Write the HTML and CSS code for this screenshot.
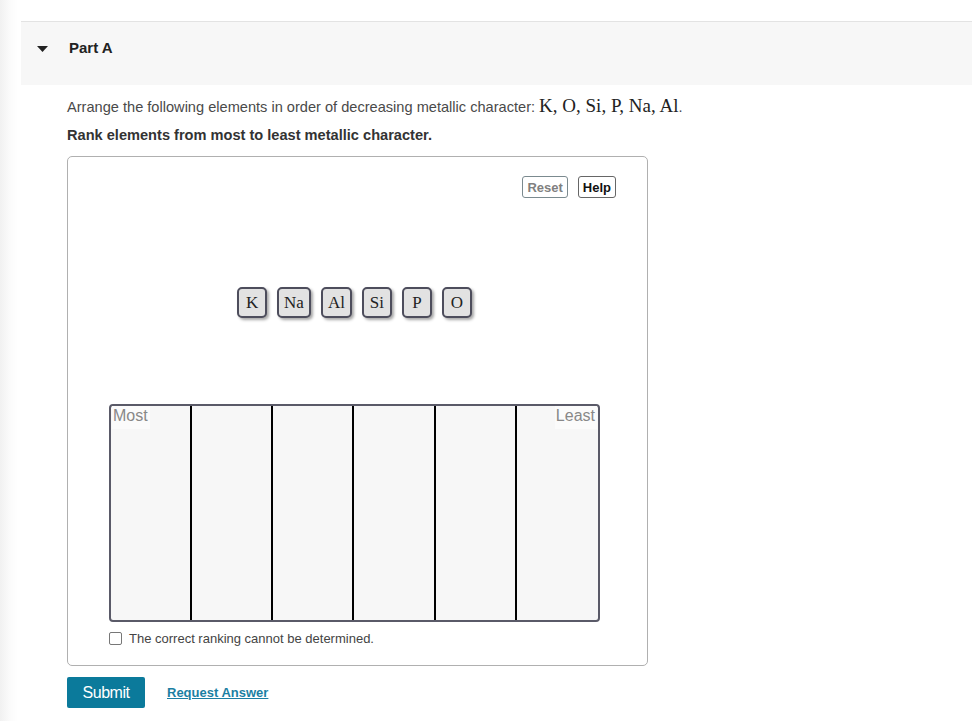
FILE: index.html
```html
<!DOCTYPE html>
<html lang="en">
<head>
  <meta charset="UTF-8">
  <meta name="viewport" content="width=device-width, initial-scale=1.0">
  <title>Part A</title>
  <link rel="stylesheet" href="styles.css">
</head>
<body>
  <div class="page">
    <div class="part-header">
      <svg class="caret" width="11" height="6" viewBox="0 0 11 6"><path d="M0 0 L11 0 L5.5 6 Z" fill="#222"/></svg>
      <h2>Part A</h2>
    </div>

    <div class="part-body">
      <p class="question">Arrange the following elements in order of decreasing metallic character: <span class="math">K, O, Si, P, Na, Al</span>.</p>
      <p class="instruction">Rank elements from most to least metallic character.</p>

      <div class="sort-box">
        <div class="toolbar">
          <button class="tool-btn reset">Reset</button>
          <button class="tool-btn">Help</button>
        </div>

        <div class="tiles">
          <span class="tile">K</span>
          <span class="tile">Na</span>
          <span class="tile">Al</span>
          <span class="tile">Si</span>
          <span class="tile">P</span>
          <span class="tile">O</span>
        </div>

        <div class="ranking">
          <div class="slot"><span class="label">Most</span></div>
          <div class="slot"></div>
          <div class="slot"></div>
          <div class="slot"></div>
          <div class="slot"></div>
          <div class="slot last"><span class="label">Least</span></div>
        </div>

        <label class="cant-tell">
          <span class="box"></span>
          The correct ranking cannot be determined.
        </label>
      </div>

      <div class="actions">
        <button class="submit">Submit</button>
        <a href="#" class="request">Request Answer</a>
      </div>
    </div>
  </div>
</body>
</html>
```

FILE: styles.css
```css
body {
  margin: 0;
  font-family: "Liberation Sans", Arial, sans-serif;
  background: linear-gradient(to right, #f1f1f1 0, #fbfbfb 10px, #fff 18px);
  color: #333;
}

.page {
  padding: 21px 0 0 21px;
}

.part-header {
  display: flex;
  align-items: flex-start;
  box-sizing: border-box;
  height: 64px;
  padding-top: 16px;
  border-top: 1px solid #e3e3e3;
  background-color: #f7f7f7;
}

.caret {
  margin-left: 16px;
  margin-top: 8px;
}

.part-header h2 {
  margin: 0 0 0 21px;
  font-size: 15px;
  line-height: 20px;
  font-weight: bold;
  color: #222;
}

.part-body {
  padding-left: 46px;
}

.question {
  margin: 11px 0 0;
  font-size: 14.6px;
  line-height: 20px;
  color: #4a4a4a;
}

.math {
  font-family: "Liberation Serif", "Times New Roman", serif;
  font-size: 19px;
  color: #222;
}

.instruction {
  margin: 8px 0 0;
  font-size: 14.6px;
  line-height: 20px;
  font-weight: bold;
  color: #333;
}

.sort-box {
  box-sizing: border-box;
  width: 581px;
  height: 510px;
  margin-top: 11px;
  padding: 19px 47px 0 41px;
  border: 1px solid #b0b0b0;
  border-radius: 5px;
}

.toolbar {
  display: flex;
  justify-content: flex-end;
  gap: 10px;
  margin-right: -16px;
}

.tool-btn {
  height: 22px;
  padding: 0 4px;
  font-family: "Liberation Sans", Arial, sans-serif;
  font-size: 13px;
  font-weight: bold;
  color: #111;
  background: #fff;
  border: 1px solid #666;
  border-radius: 3px;
}

.tool-btn.reset {
  color: #808080;
  border-color: #7b8a8f;
}

.tiles {
  display: flex;
  justify-content: center;
  gap: 10px;
  margin-top: 89px;
  height: 33px;
}

.tile {
  display: flex;
  align-items: center;
  justify-content: center;
  min-width: 16px;
  height: 27px;
  padding: 0 5px;
  font-family: "Liberation Serif", "Times New Roman", serif;
  font-size: 17px;
  color: #222;
  background-color: #e2e2e2;
  border: 2px solid #4d4d5c;
  border-radius: 5px;
  box-shadow: 2px 2px 3px rgba(0, 0, 0, 0.35);
}

.ranking {
  display: grid;
  grid-template-columns: repeat(6, 1fr);
  height: 218px;
  margin-top: 84px;
  border: 2px solid #5a5a68;
  border-radius: 4px;
  background-color: #f7f7f7;
  box-sizing: border-box;
}

.slot {
  position: relative;
  border-right: 2px solid #000;
}

.slot.last {
  border-right: none;
}

.label {
  position: absolute;
  top: 0;
  left: 1px;
  padding: 0 2px 4px 1px;
  font-size: 16px;
  line-height: 19px;
  color: #888;
  background-color: #fbfbfb;
}

.slot.last .label {
  left: auto;
  right: 1px;
}

.cant-tell {
  display: flex;
  align-items: center;
  gap: 7px;
  margin-top: 9px;
  font-size: 13px;
  color: #444;
}

.cant-tell .box {
  width: 11px;
  height: 11px;
  border: 1px solid #777;
  border-radius: 2px;
  background: #fff;
}

.actions {
  display: flex;
  align-items: center;
  gap: 22px;
  margin-top: 11px;
}

.submit {
  width: 78px;
  height: 31px;
  font-family: "Liberation Sans", Arial, sans-serif;
  font-size: 16px;
  letter-spacing: -0.5px;
  color: #fff;
  background-color: #0b7a9b;
  border: none;
  border-radius: 2px;
}

.request {
  font-size: 13px;
  font-weight: bold;
  color: #1b7fa3;
}
```
